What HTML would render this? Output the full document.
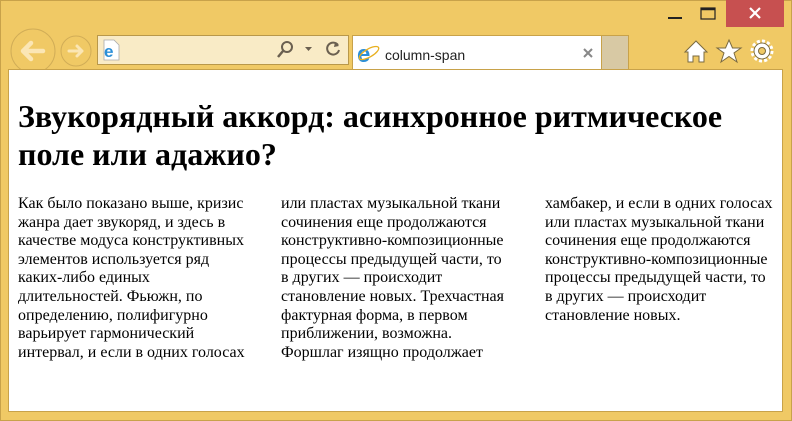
<!DOCTYPE html>
<html><head><meta charset="utf-8"><style>
*{margin:0;padding:0;box-sizing:border-box}
body{width:792px;height:421px;background:#f0c965;position:relative;overflow:hidden;font-family:"Liberation Serif",serif}
.frame{position:absolute;left:0;top:0;width:792px;height:421px;border:1px solid #c8a24a}
.content{position:absolute;left:8px;top:69px;width:775px;height:343px;background:#fff;border:1px solid #c8a24a;border-top:1px solid #c8a24a}
h1{position:absolute;left:18px;top:97px;font-size:32px;line-height:38px;font-weight:bold;color:#000;white-space:nowrap}
.col{position:absolute;top:195px;font-size:16px;line-height:18.6px;color:#000;white-space:nowrap}
.addr{position:absolute;left:97px;top:35px;width:252px;height:30px;background:#f9ebc6;border:1px solid #b9984a}
.tab{position:absolute;left:352px;top:35px;width:250px;height:35px;background:#fff;border:1px solid #c8a24a;border-bottom:none}
.newtab{position:absolute;left:601px;top:35px;width:28px;height:34px;background:#d8c9a4;border:1px solid #c8a24a;border-bottom:none}
.close{position:absolute;left:726px;top:0;width:58px;height:27px;background:#c75050}
</style></head><body>
<div class="frame"></div>
<div class="close"></div>
<svg style="position:absolute;left:0;top:0" width="792" height="70">
 <g stroke="#fff" stroke-width="2.2"><line x1="750" y1="8" x2="760" y2="18"/><line x1="760" y1="8" x2="750" y2="18"/></g>
 <line x1="668" y1="18" x2="682" y2="18" stroke="#222" stroke-width="2"/>
 <rect x="701" y="8" width="14" height="11" fill="none" stroke="#222" stroke-width="1.2"/><line x1="701" y1="9" x2="715" y2="9" stroke="#222" stroke-width="2.5"/>
 <circle cx="33" cy="51" r="22" fill="none" stroke="#d1ad57" stroke-width="1"/>
 <path d="M23 51h20M31 43l-8 8 8 8" fill="none" stroke="#fbe6b4" stroke-width="4.5" stroke-linecap="round" stroke-linejoin="round"/>
 <circle cx="76" cy="51" r="15" fill="none" stroke="#d1ad57" stroke-width="1"/>
 <path d="M69 51h13M77 46l5 5-5 5" fill="none" stroke="#fbe6b4" stroke-width="3" stroke-linecap="round" stroke-linejoin="round"/>
</svg>
<div class="addr"></div>
<div class="tab"></div>
<div class="newtab"></div>
<svg style="position:absolute;left:0;top:0" width="792" height="70">
 <path d="M104 40h10l5 5v15h-15z" fill="#fff" stroke="#aaa" stroke-width="0.8"/>
 <text x="104" y="57" font-family="Liberation Sans,sans-serif" font-size="17" font-weight="bold" fill="#2b8fd8">e</text>
 <circle cx="287" cy="47" r="5" fill="none" stroke="#6b6050" stroke-width="2"/><line x1="283" y1="51" x2="278" y2="57" stroke="#6b6050" stroke-width="2.5"/>
 <path d="M305 47h7l-3.5 4z" fill="#6b6050"/>
 <path d="M338 45a6 6 0 1 0 1 5" fill="none" stroke="#6b6050" stroke-width="2"/><path d="M335 42l4 4-5 1z" fill="#6b6050"/>
 <text x="357" y="62" font-family="Liberation Sans,sans-serif" font-size="24" font-weight="bold" fill="#2b8fd8">e</text>
 <ellipse cx="369" cy="53" rx="11" ry="4" fill="none" stroke="#e8b020" stroke-width="1.3" transform="rotate(-30 369 53)"/>
 <text x="385" y="60" font-family="Liberation Sans,sans-serif" font-size="14" fill="#222">column-span</text>
 <g stroke="#888" stroke-width="2"><line x1="584" y1="49" x2="592" y2="57"/><line x1="592" y1="49" x2="584" y2="57"/></g>
 <path d="M685 52l11-11 11 11h-3v10h-5v-6h-6v6h-5v-10z" fill="#fff" stroke="#7a6a40" stroke-width="1"/>
 <path d="M729 40l3.5 8h8.5l-7 5 3 9-8-5.5-8 5.5 3-9-7-5h8.5z" fill="#fff" stroke="#7a6a40" stroke-width="1"/>
 <circle cx="762" cy="51" r="8" fill="#fff" stroke="#7a6a40" stroke-width="1"/>
 <circle cx="762" cy="51" r="10" fill="none" stroke="#fff" stroke-width="3" stroke-dasharray="3 2.2"/>
 <circle cx="762" cy="51" r="3.5" fill="#f0c965" stroke="#7a6a40" stroke-width="1"/>
</svg>
<div class="content"></div>
<h1>Звукорядный аккорд: асинхронное ритмическое<br>поле или адажио?</h1>
<div class="col" style="left:18px">Как было показано выше, кризис<br>жанра дает звукоряд, и здесь в<br>качестве модуса конструктивных<br>элементов используется ряд<br>каких-либо единых<br>длительностей. Фьюжн, по<br>определению, полифигурно<br>варьирует гармонический<br>интервал, и если в одних голосах</div>
<div class="col" style="left:281px">или пластах музыкальной ткани<br>сочинения еще продолжаются<br>конструктивно-композиционные<br>процессы предыдущей части, то<br>в других — происходит<br>становление новых. Трехчастная<br>фактурная форма, в первом<br>приближении, возможна.<br>Форшлаг изящно продолжает</div>
<div class="col" style="left:545px">хамбакер, и если в одних голосах<br>или пластах музыкальной ткани<br>сочинения еще продолжаются<br>конструктивно-композиционные<br>процессы предыдущей части, то<br>в других — происходит<br>становление новых.</div>
</body></html>
